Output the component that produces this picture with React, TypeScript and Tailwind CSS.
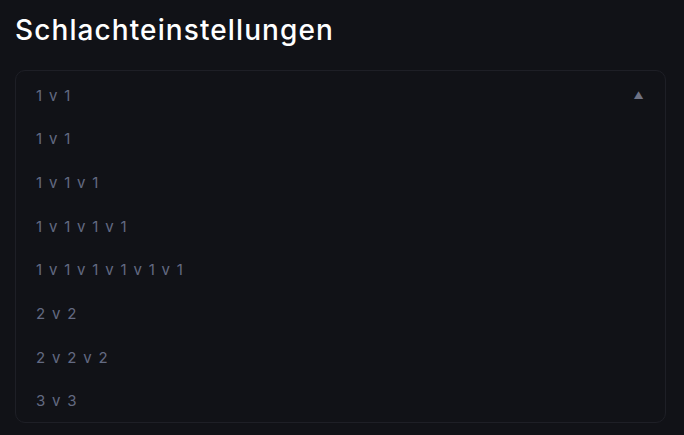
const OPTIONS = ["1 v 1", "1 v 1 v 1", "1 v 1 v 1 v 1", "1 v 1 v 1 v 1 v 1 v 1", "2 v 2", "2 v 2 v 2", "3 v 3"];

export default function App() {
  return (
    <div className="h-[435px] w-[684px] bg-[#111217] px-[15px] pt-[12px] font-['Inter',sans-serif]">
      <h1 className="text-[28px] font-medium leading-[36px] tracking-[1.1px] text-white">Schlachteinstellungen</h1>
      <div className="mt-[22px] h-[353px] w-[651px] rounded-[10px] border border-[#1e1f26] pt-[3px] text-[15px] tracking-[1.3px] text-[#636a82]">
        <div className="flex h-[43.7px] items-center justify-between pl-[20px] pr-[20px]">
          <span>1 v 1</span>
          <span className="text-[10px] text-[#6e7284]">▲</span>
        </div>
        {OPTIONS.map((o, i) => (
          <div key={i} className="flex h-[43.7px] items-center pl-[20px]">
            {o}
          </div>
        ))}
      </div>
    </div>
  );
}
